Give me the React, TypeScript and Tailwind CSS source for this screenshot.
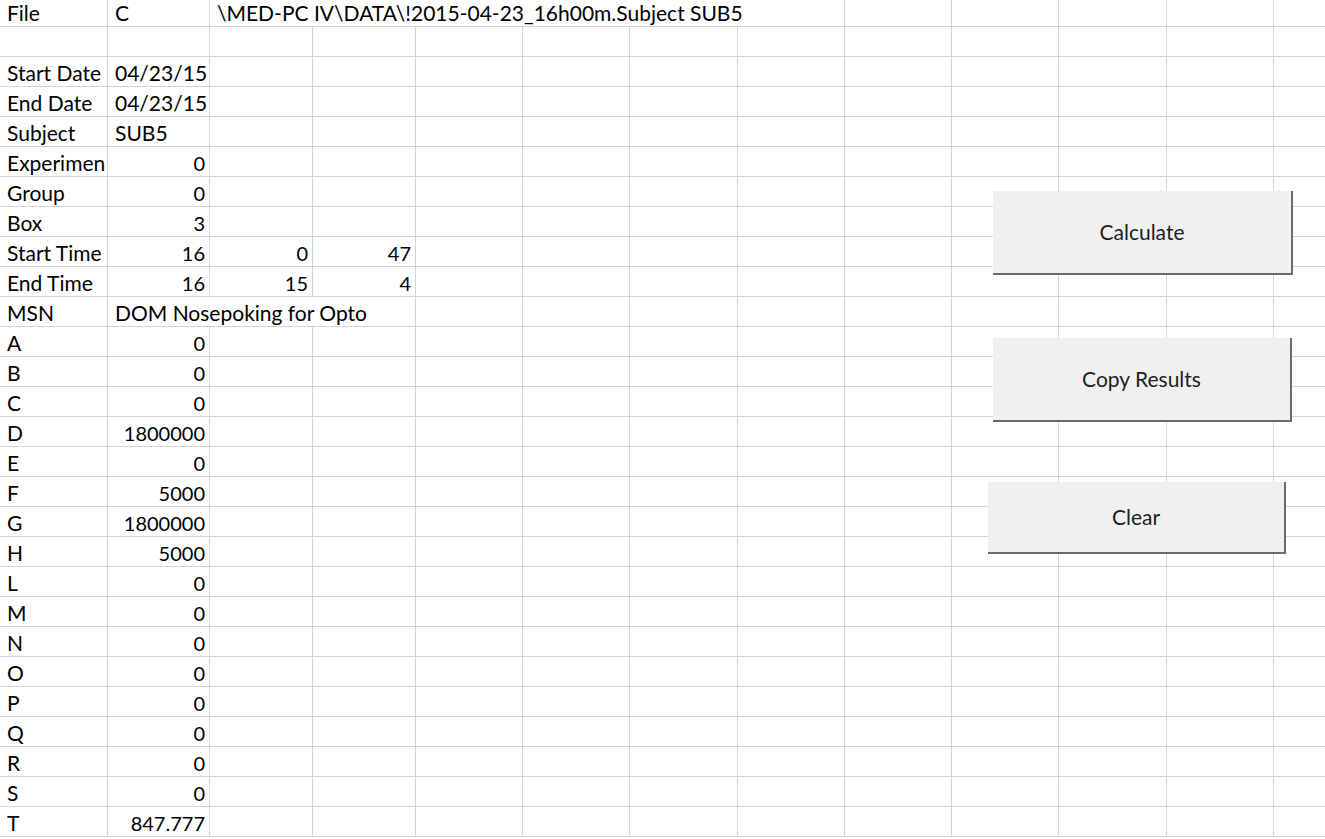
const COLS = [108, 102, 103, 103, 107, 107, 108, 107, 107, 107, 108, 107, 60];

type Cell = { text?: string; align?: 'l' | 'r'; span?: number };

const labels = ['A', 'B', 'C', 'D', 'E', 'F', 'G', 'H', 'L', 'M', 'N', 'O', 'P', 'Q', 'R', 'S', 'T'];
const values = ['0', '0', '0', '1800000', '0', '5000', '1800000', '5000', '0', '0', '0', '0', '0', '0', '0', '0', '847.777'];

const rows: Cell[][] = [
  [{ text: 'File' }, { text: 'C' }, { text: '\\MED-PC IV\\DATA\\!2015-04-23_16h00m.Subject SUB5', span: 6 }],
  [],
  [{ text: 'Start Date' }, { text: '04/23/15' }],
  [{ text: 'End Date' }, { text: '04/23/15' }],
  [{ text: 'Subject' }, { text: 'SUB5' }],
  // Excel clips the label at the column edge
  [{ text: 'Experimen' }, { text: '0', align: 'r' }],
  [{ text: 'Group' }, { text: '0', align: 'r' }],
  [{ text: 'Box' }, { text: '3', align: 'r' }],
  [{ text: 'Start Time' }, { text: '16', align: 'r' }, { text: '0', align: 'r' }, { text: '47', align: 'r' }],
  [{ text: 'End Time' }, { text: '16', align: 'r' }, { text: '15', align: 'r' }, { text: '4', align: 'r' }],
  [{ text: 'MSN' }, { text: 'DOM Nosepoking for Opto', span: 3 }],
  ...labels.map((l, i) => [{ text: l }, { text: values[i], align: 'r' as const }]),
];

function Row({ cells }: { cells: Cell[] }) {
  const out: React.ReactNode[] = [];
  let col = 0;
  cells.forEach((c, i) => {
    const span = c.span ?? 1;
    const w = COLS.slice(col, col + span).reduce((a, b) => a + b, 0);
    out.push(
      <div
        key={i}
        style={{ width: w }}
        className={`h-[30px] shrink-0 border-r border-b border-[#d4d4d4] flex items-end pb-[1px] overflow-hidden whitespace-nowrap leading-[24px] ${
          c.align === 'r' ? 'justify-end pr-[4px] text-[20px]' : 'justify-start pl-[7px] text-[21px]'
        }`}
      >
        {c.text}
      </div>
    );
    col += span;
  });
  for (; col < COLS.length; col++) {
    out.push(
      <div
        key={`e${col}`}
        style={{ width: COLS[col] }}
        className="h-[30px] shrink-0 border-r border-b border-[#d4d4d4]"
      />
    );
  }
  return <div className="flex">{out}</div>;
}

function XlButton({ label, className }: { label: string; className: string }) {
  return (
    <div
      className={`absolute bg-[#f0f0f0] border-r-2 border-b-2 border-[#6b6b6b] flex items-center justify-center text-[#1e1e1e] text-[21px] ${className}`}
    >
      {label}
    </div>
  );
}

export default function App() {
  return (
    <div
      className="relative w-[1325px] h-[839px] overflow-hidden bg-white text-black"
      style={{ fontFamily: 'Lato, "Open Sans", sans-serif' }}
    >
      <div className="-mt-[3px]">
        {rows.map((r, i) => (
          <Row key={i} cells={r} />
        ))}
      </div>
      <XlButton label="Calculate" className="left-[993px] top-[191px] w-[300px] h-[84px]" />
      <XlButton label="Copy Results" className="left-[993px] top-[338px] w-[299px] h-[84px]" />
      <XlButton label="Clear" className="left-[988px] top-[482px] w-[298px] h-[72px]" />
    </div>
  );
}
